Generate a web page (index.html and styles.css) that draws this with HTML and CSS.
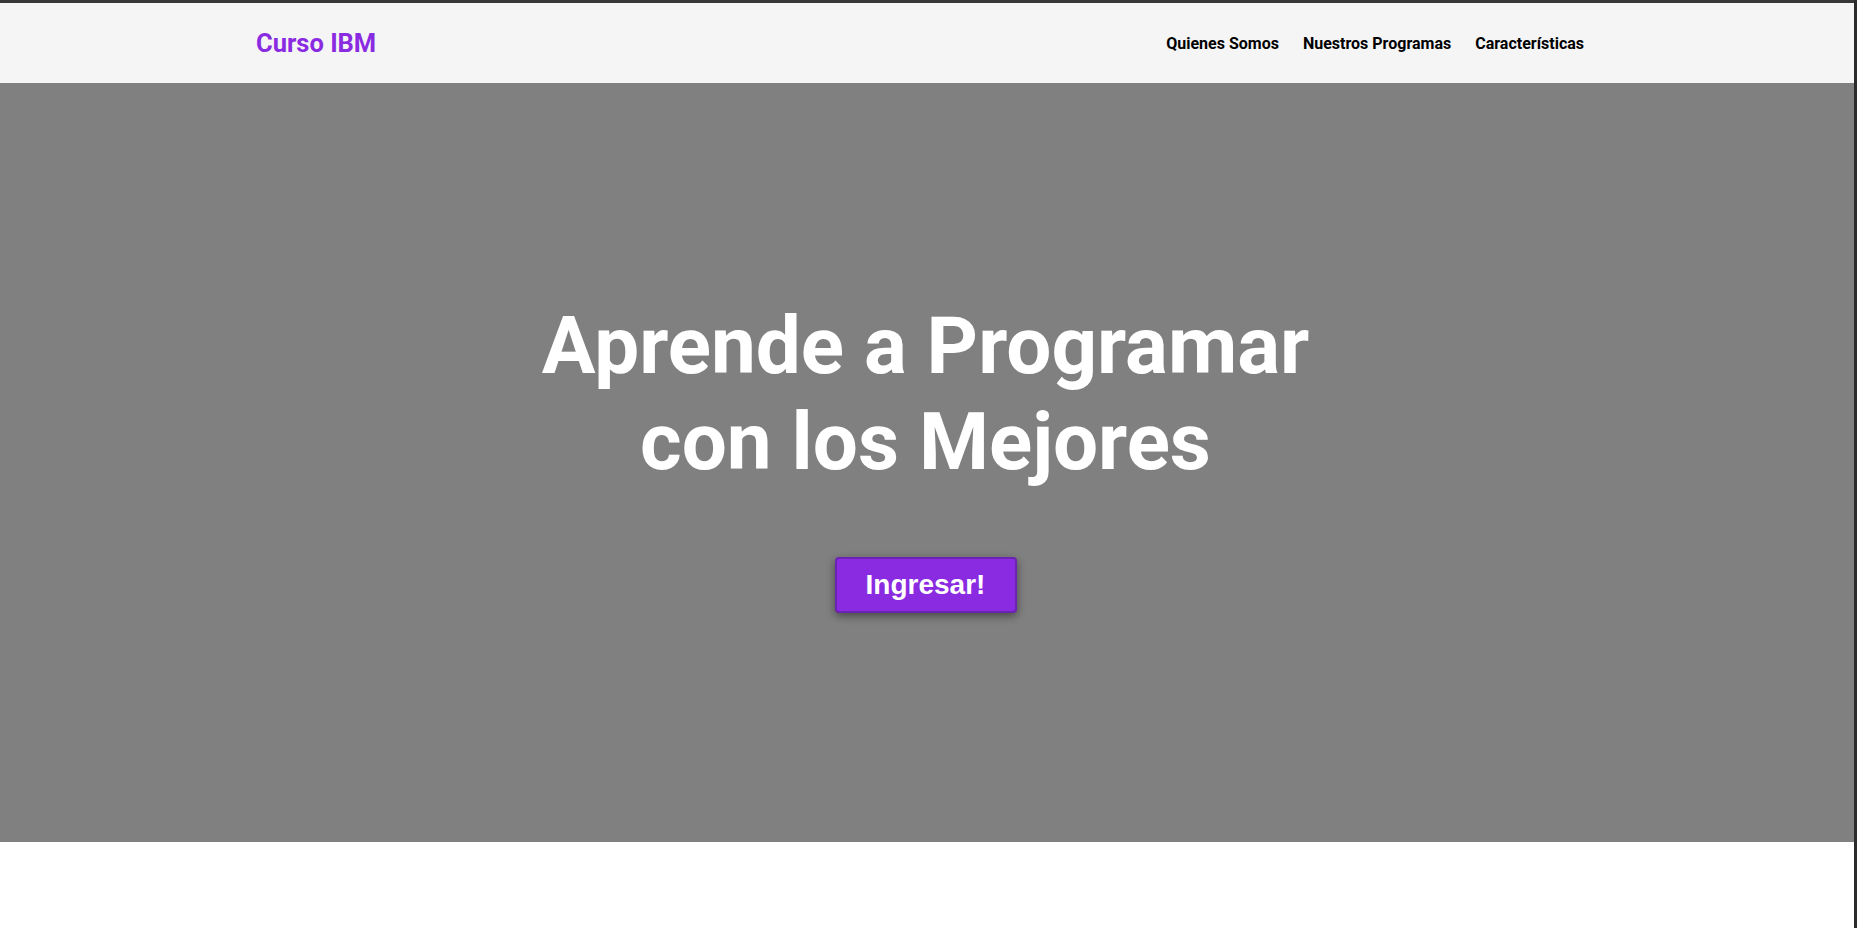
FILE: index.html
```html
<!DOCTYPE html>
<html lang="es">
<head>
<meta charset="utf-8">
<title>Curso IBM</title>
<link rel="stylesheet" href="styles.css">
</head>
<body>
<div class="frame">
  <header class="header">
    <div class="container header-inner">
      <a class="logo" href="#">Curso IBM</a>
      <nav class="nav">
        <a class="nav-link" href="#">Quienes Somos</a>
        <a class="nav-link" href="#">Nuestros Programas</a>
        <a class="nav-link" href="#">Características</a>
      </nav>
    </div>
  </header>
  <section class="hero">
    <h1 class="hero-title">Aprende a Programar<br>con los Mejores</h1>
    <button class="btn" type="button">Ingresar!</button>
  </section>
  <main class="content"></main>
</div>
</body>
</html>
```

FILE: styles.css
```css
html, body {
  margin: 0;
  padding: 0;
  height: 100%;
}
body {
  background: #2b2b2b;
  font-family: Roboto, "Liberation Sans", Arial, sans-serif;
}
.frame {
  border-top: 3px solid #383838;
  margin-right: 3px;
  background: #ffffff;
  min-height: calc(100% - 3px);
}
.container {
  width: 1342px;
  margin: 0 auto;
}
.header {
  background: #f5f5f5;
  height: 80px;
}
.header-inner {
  height: 100%;
  display: flex;
  align-items: center;
  justify-content: space-between;
}
.logo {
  color: #8a2be2;
  font-weight: 700;
  font-size: 25.5px;
  text-decoration: none;
}
.nav {
  display: flex;
  align-items: center;
  margin-right: 2px;
}
.nav-link {
  color: #000;
  font-weight: 700;
  font-size: 16px;
  text-decoration: none;
  padding: 0 12px;
}
.hero {
  background: #808080;
  height: 759px;
  display: flex;
  flex-direction: column;
  align-items: center;
  justify-content: center;
  box-sizing: border-box;
  padding: 0 3px 14px 0;
}
.hero-title {
  margin: 0 0 67px;
  color: #fff;
  font-size: 80px;
  line-height: 96px;
  font-weight: 700;
  text-align: center;
}
.btn {
  display: block;
  box-sizing: border-box;
  width: 182px;
  height: 56px;
  padding: 0;
  text-align: center;
  background: #8a2be2;
  border: 2px solid #6c22b3;
  border-radius: 4px;
  color: #fff;
  font-family: "Liberation Sans", Arial, sans-serif;
  font-weight: 700;
  font-size: 28px;
  cursor: pointer;
  box-shadow: 0 3px 8px rgba(0, 0, 0, 0.45);
}
.content {
  height: 86px;
}
```
